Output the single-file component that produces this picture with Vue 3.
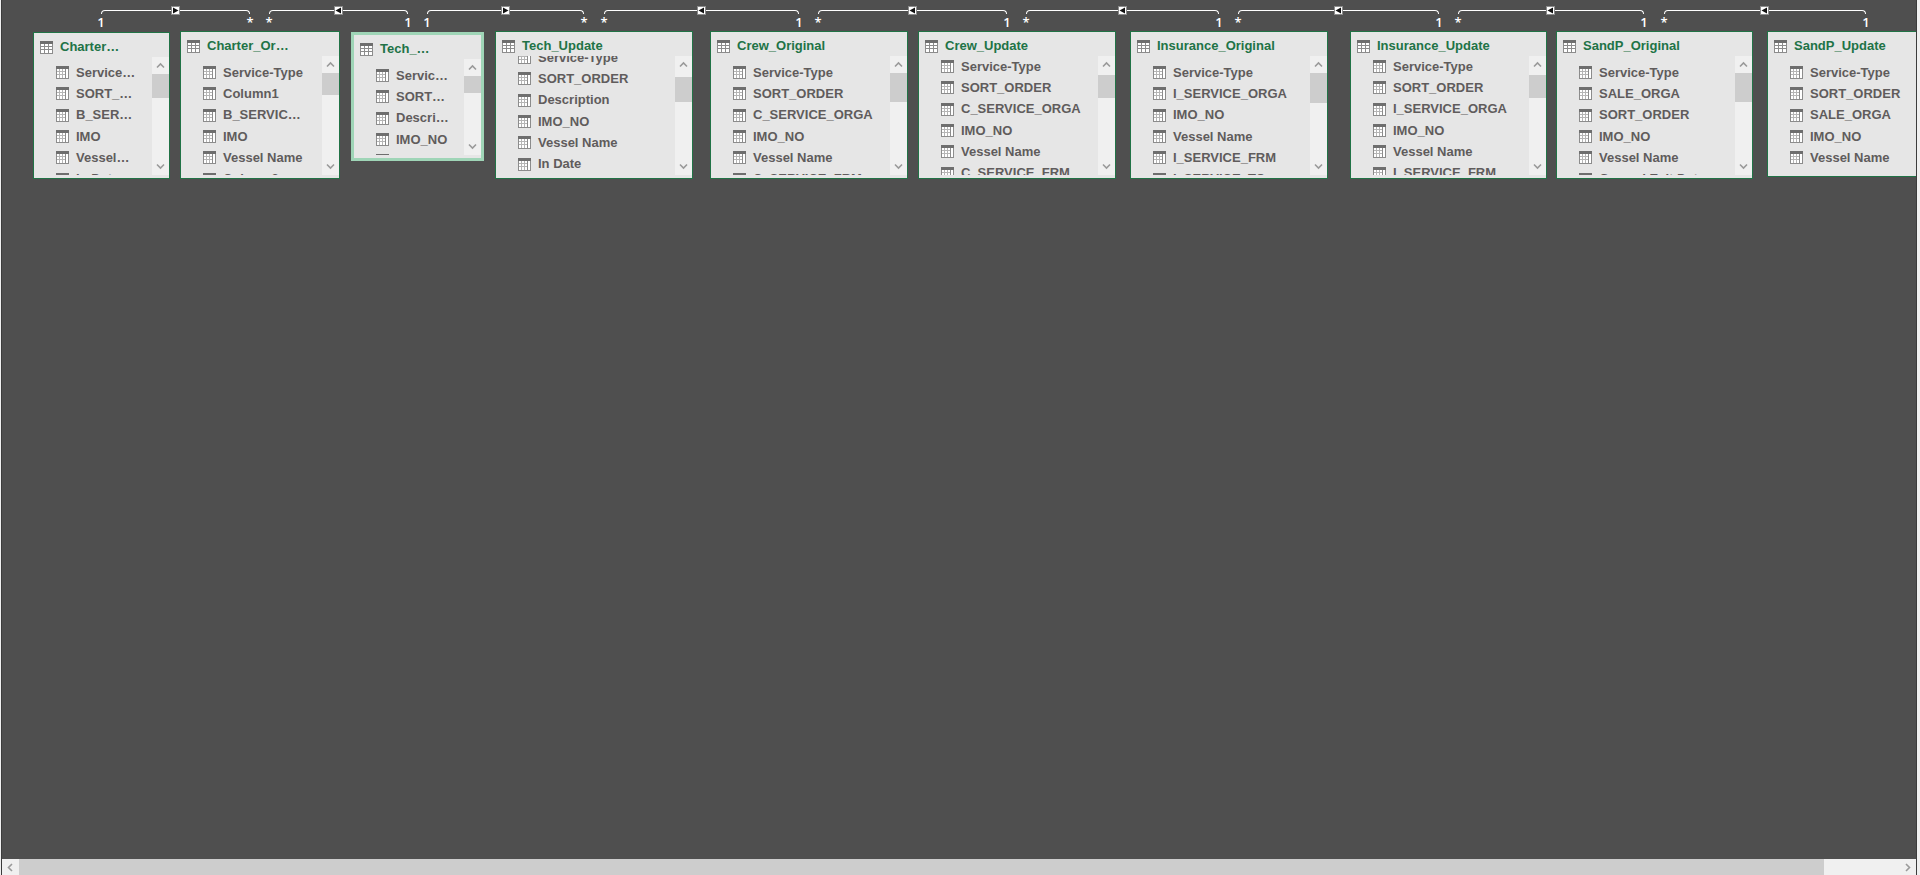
<template>
  <div class="workspace">
    <main class="canvas">
      <!-- relationships -->
      <div
        v-for="link in links"
        :key="link.x1"
        class="link"
        :style="{ left: `${link.x1}px`, width: `${link.x2 - link.x1}px` }"
      >
        <span class="link-line"></span>
        <svg class="link-arrow" viewBox="0 0 9 9">
          <rect width="9" height="9" fill="#8c8c8c" />
          <rect x="1" y="1" width="7" height="7" fill="#fff" />
          <path v-if="link.dir === 'right'" d="M2 1.5V7.5L7.5 4.5Z" fill="#111" />
          <path v-else d="M7 1.5V7.5L1.5 4.5Z" fill="#111" />
        </svg>
        <span class="link-end start">{{ link.dir === 'right' ? '1' : '*' }}</span>
        <span class="link-end end">{{ link.dir === 'right' ? '*' : '1' }}</span>
      </div>

      <!-- tables -->
      <section
        v-for="table in tables"
        :key="table.name"
        :class="['node', { selected: table.selected }]"
        :style="{
          left: `${table.x}px`,
          top: `${table.y}px`,
          width: `${table.w}px`,
          height: `${table.h}px`,
        }"
      >
        <header class="node-header">
          <svg class="icon" viewBox="0 0 13 13" shape-rendering="crispEdges">
            <rect width="13" height="13" fill="#8c8c8c" />
            <rect width="13" height="3" fill="#6e6e6e" />
            <path
              d="M1 3h3v2h-3zM5 3h3v2h-3zM9 3h3v2h-3zM1 6h3v2h-3zM5 6h3v2h-3zM9 6h3v2h-3zM1 9h3v3h-3zM5 9h3v3h-3zM9 9h3v3h-3z"
              fill="#fff"
            />
          </svg>
          <h2 class="node-title">{{ table.name }}</h2>
        </header>
        <div class="node-body">
          <ul class="fields" :style="{ marginTop: `${-table.scroll}px` }">
            <li v-for="field in table.fields" :key="field" class="field">
              <svg class="icon" viewBox="0 0 13 13" shape-rendering="crispEdges">
                <rect width="13" height="13" fill="#8c8c8c" />
                <rect width="13" height="3" fill="#6e6e6e" />
                <path d="M1 3h8v9h-8zM10 3h2v9h-2z" fill="#fff" />
                <path d="M1 5h8v1h-8zM1 8h8v1h-8zM3 3h1v9h-1zM6 3h1v9h-1z" fill="#b5b5b5" />
              </svg>
              <span class="field-name">{{ field }}</span>
            </li>
          </ul>
          <div v-if="table.thumb" class="scrollbar">
            <button class="scroll-btn" aria-label="Scroll up">
              <svg viewBox="0 0 9 9"><path d="M1 6.5L4.5 3L8 6.5" /></svg>
            </button>
            <div class="track">
              <div
                class="thumb"
                :style="{ marginTop: `${table.thumb[0]}px`, height: `${table.thumb[1]}px` }"
              ></div>
            </div>
            <button class="scroll-btn" aria-label="Scroll down">
              <svg viewBox="0 0 9 9"><path d="M1 2.5L4.5 6L8 2.5" /></svg>
            </button>
          </div>
        </div>
      </section>
    </main>

    <div class="scrollbar horizontal">
      <button class="scroll-btn" aria-label="Scroll left">
        <svg viewBox="0 0 9 9"><path d="M6 1L2.5 4.5L6 8" /></svg>
      </button>
      <div class="track">
        <div class="thumb"></div>
      </div>
      <button class="scroll-btn" aria-label="Scroll right">
        <svg viewBox="0 0 9 9"><path d="M3 1L6.5 4.5L3 8" /></svg>
      </button>
    </div>
  </div>
</template>

<script setup>
import { ref } from 'vue'

const links = ref([
  { x1: 101, x2: 250, dir: 'right' },
  { x1: 269, x2: 408, dir: 'left' },
  { x1: 427, x2: 584, dir: 'right' },
  { x1: 604, x2: 799, dir: 'left' },
  { x1: 818, x2: 1007, dir: 'left' },
  { x1: 1026, x2: 1219, dir: 'left' },
  { x1: 1238, x2: 1439, dir: 'left' },
  { x1: 1458, x2: 1644, dir: 'left' },
  { x1: 1664, x2: 1866, dir: 'left' },
])

// thumb: [offset inside the track, length]
const tables = ref([
  {
    name: 'Charter…',
    x: 33, y: 32, w: 137, h: 147, scroll: 1, thumb: [0, 24],
    fields: ['Service…', 'SORT_…', 'B_SER…', 'IMO', 'Vessel…', 'In Date'],
  },
  {
    name: 'Charter_Or…',
    x: 180, y: 31, w: 160, h: 148, scroll: 0, thumb: [0, 22],
    fields: ['Service-Type', 'Column1', 'B_SERVIC…', 'IMO', 'Vessel Name', 'Column2'],
  },
  {
    name: 'Tech_…',
    x: 351, y: 32, w: 133, h: 129, scroll: 0, thumb: [0, 17], selected: true,
    fields: ['Servic…', 'SORT…', 'Descri…', 'IMO_NO', 'Vessel…', 'In Date'],
  },
  {
    name: 'Tech_Update',
    x: 495, y: 31, w: 198, h: 148, scroll: 15, thumb: [4, 25],
    fields: ['Service-Type', 'SORT_ORDER', 'Description', 'IMO_NO', 'Vessel Name', 'In Date'],
  },
  {
    name: 'Crew_Original',
    x: 710, y: 31, w: 198, h: 148, scroll: 0, thumb: [0, 29],
    fields: ['Service-Type', 'SORT_ORDER', 'C_SERVICE_ORGA', 'IMO_NO', 'Vessel Name', 'C_SERVICE_FRM'],
  },
  {
    name: 'Crew_Update',
    x: 918, y: 31, w: 198, h: 148, scroll: 6, thumb: [2, 23],
    fields: ['Service-Type', 'SORT_ORDER', 'C_SERVICE_ORGA', 'IMO_NO', 'Vessel Name', 'C_SERVICE_FRM'],
  },
  {
    name: 'Insurance_Original',
    x: 1130, y: 31, w: 198, h: 148, scroll: 0, thumb: [0, 30],
    fields: ['Service-Type', 'I_SERVICE_ORGA', 'IMO_NO', 'Vessel Name', 'I_SERVICE_FRM', 'I_SERVICE_TO'],
  },
  {
    name: 'Insurance_Update',
    x: 1350, y: 31, w: 197, h: 148, scroll: 6, thumb: [2, 23],
    fields: ['Service-Type', 'SORT_ORDER', 'I_SERVICE_ORGA', 'IMO_NO', 'Vessel Name', 'I_SERVICE_FRM'],
  },
  {
    name: 'SandP_Original',
    x: 1556, y: 31, w: 197, h: 148, scroll: 0, thumb: [0, 29],
    fields: ['Service-Type', 'SALE_ORGA', 'SORT_ORDER', 'IMO_NO', 'Vessel Name', 'Ground Exit Date'],
  },
  {
    name: 'SandP_Update',
    x: 1767, y: 31, w: 198, h: 146, scroll: 0, thumb: [0, 29],
    fields: ['Service-Type', 'SORT_ORDER', 'SALE_ORGA', 'IMO_NO', 'Vessel Name', 'Ground Exit Date'],
  },
])
</script>

<style>
body {
  background-color: #f0f0f0;
}
</style>

<style scoped>
.workspace {
  display: flex;
  flex-direction: column;
  height: 100vh;
  box-sizing: border-box;
  margin-left: 1px;
  margin-right: 3px;
  border-left: 1px solid #3c3c3c;
  border-right: 1px solid #3c3c3c;
  font-family: 'Liberation Sans', Arial, sans-serif;
}

.canvas {
  position: relative;
  flex: 1;
  min-height: 0;
  overflow: hidden;
  background-color: #4f4f4f;
  /* node coordinates are counted from the window edge */
  margin-left: -2px;
  clip-path: inset(0 0 0 2px);
}

/* relationships */
.link {
  position: absolute;
  top: 10px;
  height: 18px;
}

.link-line {
  display: block;
  height: 4px;
  border: 1px solid #fff;
  border-bottom: none;
  border-radius: 4px 4px 0 0;
  box-sizing: border-box;
}

.link-arrow {
  position: absolute;
  left: calc(50% - 5px);
  top: -4px;
  width: 9px;
  height: 9px;
}

.link-end {
  position: absolute;
  top: 4px;
  width: 12px;
  color: #fff;
  font-family: 'Open Sans', 'Noto Sans', sans-serif;
  font-size: 13px;
  font-weight: 600;
  line-height: 16px;
  text-align: center;
}

.link-end.start {
  left: -6px;
}

.link-end.end {
  right: -6px;
}

/* table node */
.node {
  position: absolute;
  display: flex;
  flex-direction: column;
  box-sizing: border-box;
  padding-bottom: 3px;
  border: 1px solid #217346;
  background-color: #e6e6e6;
}

.node.selected {
  border: 3px solid #9fd5b7;
}

.node-header {
  display: flex;
  align-items: center;
  gap: 7px;
  box-sizing: border-box;
  height: 24px;
  padding: 4px 0 0 6px;
}

.node-title {
  margin: 0;
  color: #217346;
  font-size: 13px;
  font-weight: 700;
  line-height: 16px;
  white-space: nowrap;
}

.node-body {
  display: flex;
  flex: 1;
  min-height: 0;
  overflow: hidden;
}

.fields {
  flex: 1;
  display: grid;
  grid-template-rows: repeat(6, 1fr);
  height: 128px;
  margin: 0;
  padding: 6px 0 0 22px;
  list-style: none;
}

.field {
  display: flex;
  align-items: center;
  gap: 7px;
  color: #605c5c;
  font-size: 13px;
  font-weight: 700;
  line-height: 16px;
  white-space: nowrap;
}

.icon {
  flex: none;
  width: 13px;
  height: 13px;
}

/* scrollbars */
.scrollbar {
  display: flex;
  flex-direction: column;
  flex: none;
  width: 17px;
  background-color: #f0f0f0;
}

.scroll-btn {
  display: flex;
  align-items: center;
  justify-content: center;
  flex: none;
  width: 17px;
  height: 17px;
  padding: 0;
  border: none;
  background-color: #f0f0f0;
}

.scroll-btn svg {
  width: 9px;
  height: 9px;
  fill: none;
  stroke: #9a9a9a;
  stroke-width: 1.6;
}

.track {
  flex: 1;
  min-height: 0;
}

.thumb {
  background-color: #cdcdcd;
}

.scrollbar.horizontal {
  flex-direction: row;
  width: auto;
  height: 16px;
}

.horizontal .scroll-btn {
  height: 16px;
}

.horizontal .thumb {
  width: 96%;
  height: 100%;
}
</style>
